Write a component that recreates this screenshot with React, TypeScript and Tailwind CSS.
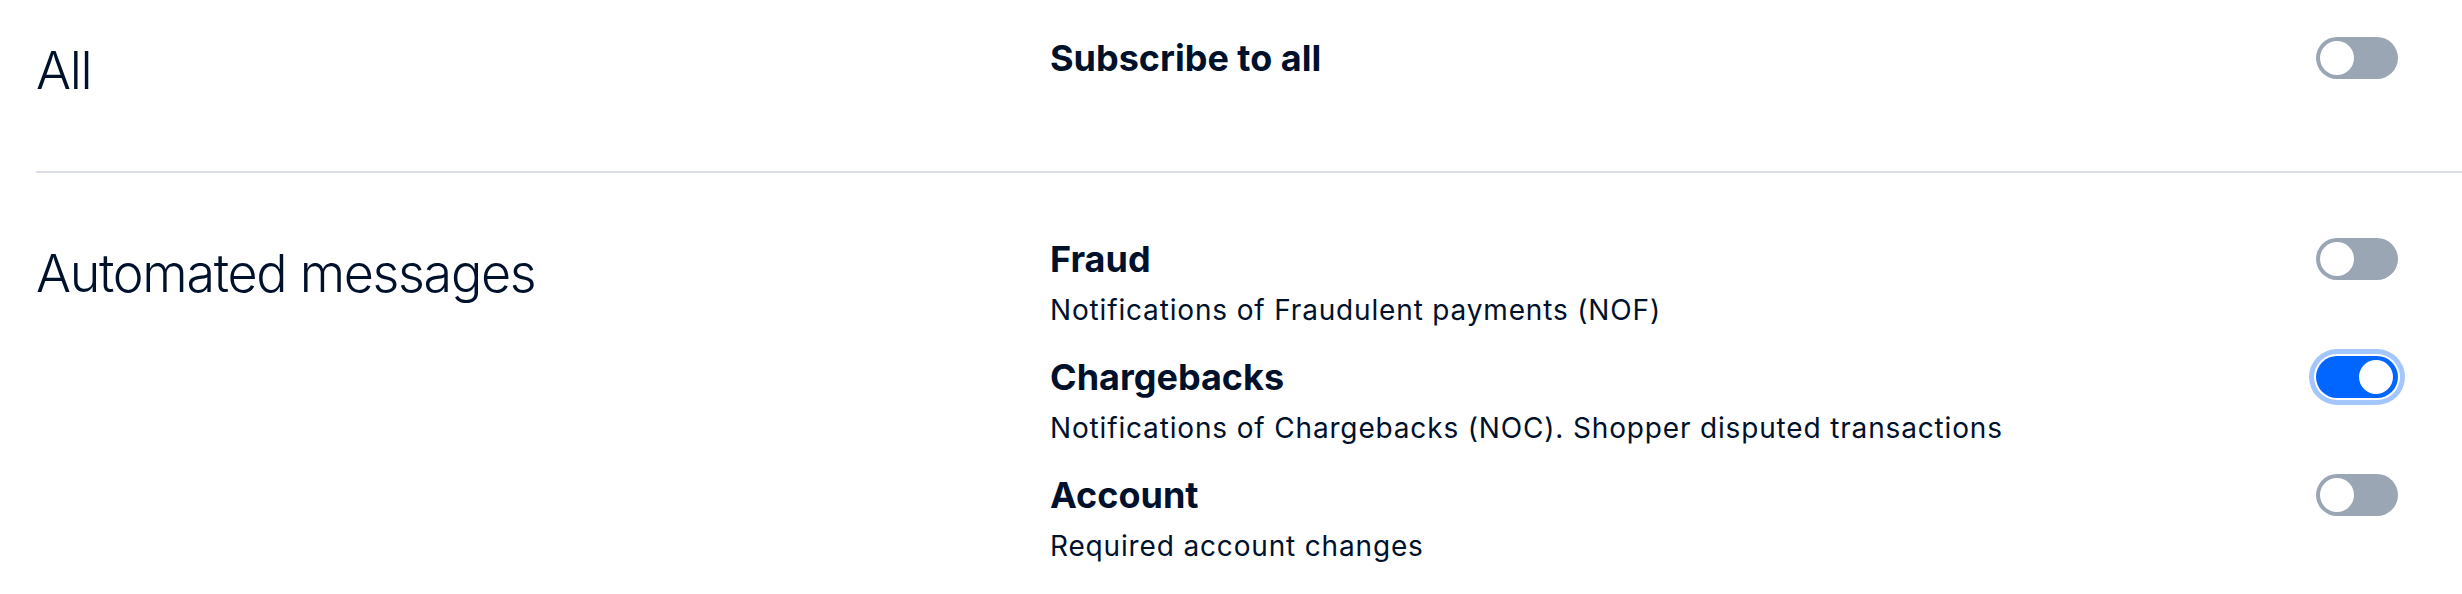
import { useState } from "react";

interface IToggleProps {
  checked: boolean;
  focused?: boolean;
  onChange: () => void;
}

const Toggle = ({ checked, focused, onChange }: IToggleProps) => {
  return (
    <button
      type="button"
      role="switch"
      aria-checked={checked}
      onClick={onChange}
      className={`flex h-[42px] w-[82px] shrink-0 items-center rounded-full px-[4px] ${
        checked ? "justify-end bg-[#0066ff] pr-[5px]" : "justify-start bg-[#9aa6b4]"
      } ${focused ? "ring-[5px] ring-[#a3c6ff] ring-offset-2 ring-offset-white" : ""}`}
    >
      <span className="block h-[34px] w-[34px] rounded-full bg-white" />
    </button>
  );
};

interface IItem {
  id: string;
  title: string;
  description?: string;
}

const automated: IItem[] = [
  { id: "fraud", title: "Fraud", description: "Notifications of Fraudulent payments (NOF)" },
  {
    id: "chargebacks",
    title: "Chargebacks",
    description: "Notifications of Chargebacks (NOC). Shopper disputed transactions",
  },
  { id: "account", title: "Account", description: "Required account changes" },
];

const Row = ({
  item,
  checked,
  focused,
  onToggle,
}: {
  item: IItem;
  checked: boolean;
  focused?: boolean;
  onToggle: () => void;
}) => (
  <div className="flex items-start justify-between">
    <div className="flex flex-col">
      <h4 className="text-[36px] font-bold leading-[48px] tracking-[0em]">{item.title}</h4>
      {item.description && (
        <p className="mt-[1px] text-[28px] font-normal leading-[52px] tracking-[0.03em]">{item.description}</p>
      )}
    </div>
    <div className="flex h-[48px] items-center">
      <Toggle checked={checked} focused={focused} onChange={onToggle} />
    </div>
  </div>
);

export default function App() {
  const [state, setState] = useState<Record<string, boolean>>({
    all: false,
    fraud: false,
    chargebacks: true,
    account: false,
  });

  const flip = (id: string) => setState((s) => ({ ...s, [id]: !s[id] }));

  return (
    <div className="min-h-screen bg-white pl-[36px] font-['Inter','Noto_Sans',sans-serif] text-[#00112c]">
      <section className="flex border-b-2 border-[#dbdfe3] pb-[74px] pr-[64px] pt-[34px]">
        <h3 className="mt-[11px] w-[1014px] shrink-0 text-[52px] font-light leading-[52px] tracking-[-0.025em]">
          All
        </h3>
        <div className="flex-1">
          <Row
            item={{ id: "all", title: "Subscribe to all" }}
            checked={state.all}
            onToggle={() => flip("all")}
          />
        </div>
      </section>
      <section className="flex pr-[64px] pt-[62px]">
        <h3 className="mt-[13px] w-[1014px] shrink-0 text-[52px] font-light leading-[52px] tracking-[-0.025em]">
          Automated messages
        </h3>
        <div className="flex flex-1 flex-col gap-[17px]">
          {automated.map((item) => (
            <Row
              key={item.id}
              item={item}
              checked={state[item.id]}
              focused={item.id === "chargebacks"}
              onToggle={() => flip(item.id)}
            />
          ))}
        </div>
      </section>
    </div>
  );
}
